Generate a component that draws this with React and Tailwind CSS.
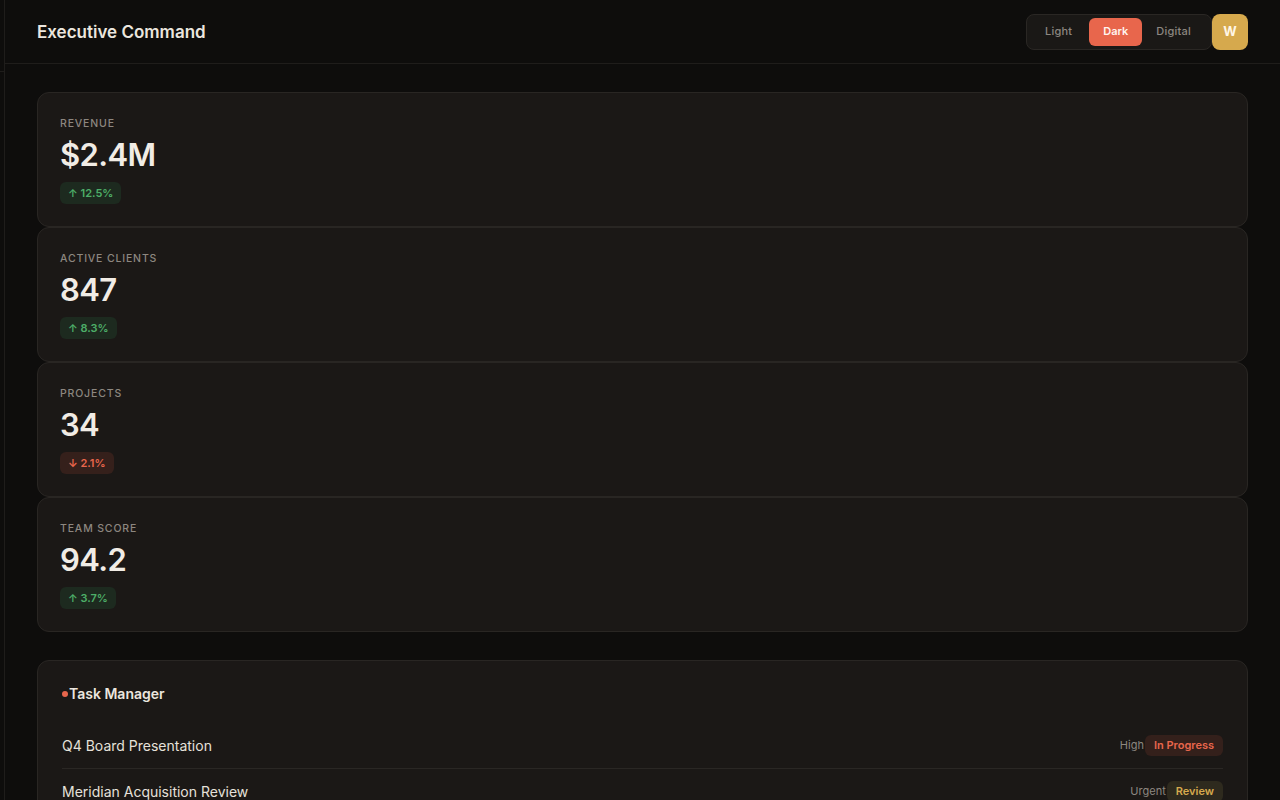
import React from "react";

const stats = [
  { label: "Revenue", value: "$2.4M", delta: "12.5%", up: true },
  { label: "Active Clients", value: "847", delta: "8.3%", up: true },
  { label: "Projects", value: "34", delta: "2.1%", up: false },
  { label: "Team Score", value: "94.2", delta: "3.7%", up: true },
];

const tasks = [
  { name: "Q4 Board Presentation", priority: "High", status: "In Progress", tone: "red" },
  { name: "Meridian Acquisition Review", priority: "Urgent", status: "Review", tone: "gold" },
  { name: "Annual Strategy Offsite", priority: "Medium", status: "Planned", tone: "green" },
];

export default function App() {
  return (
    <div
      className="flex min-h-screen w-full bg-[#0e0d0c] text-[#ebe6df]"
      style={{ fontFamily: "Inter, 'Noto Sans', sans-serif" }}
    >
      <aside className="w-[5px] shrink-0 border-r border-[#1f1d1b]">
        <div className="h-[72px] border-b border-[#1f1d1b]" />
      </aside>
      <div className="flex min-w-0 flex-1 flex-col">
        <header className="flex h-16 items-center justify-between border-b border-[#1f1d1b] pl-8 pr-8">
          <h1 className="pt-[2px] text-[17px] font-semibold tracking-[0em] text-[#ebe6df]">Executive Command</h1>
          <div className="flex items-center">
            <div className="flex h-9 items-center gap-0 rounded-lg border border-[#2a2724] bg-[#1a1816] px-1">
              <button className="h-7 pl-[14px] pr-[17px] text-[11px] font-medium tracking-[0.02em] text-[#8d8780]">Light</button>
              <button className="h-7 rounded-md bg-[#e8664c] px-[14px] text-[11px] font-semibold text-[#fff4ee]">Dark</button>
              <button className="h-7 pl-[14px] pr-[16px] text-[11px] font-medium tracking-[0.02em] text-[#8d8780]">Digital</button>
            </div>
            <div className="flex h-9 w-9 items-center justify-center rounded-lg bg-[#d6a94d] text-[13px] font-bold text-[#fff6e6]">
              W
            </div>
          </div>
        </header>
        <main className="flex flex-col px-8 pt-7">
          <div className="flex flex-col">
            {stats.map((s) => (
              <div
                key={s.label}
                className="flex h-[135px] flex-col rounded-xl border border-[#292623] bg-[#1b1816] px-[22px] pt-[23px]"
              >
                <div className="text-[10.5px] font-medium uppercase leading-4 tracking-[0.08em] text-[#8d8780]">
                  {s.label}
                </div>
                <div className="mt-[3px] text-[31px] font-semibold leading-10 tracking-[-0.02em] text-[#f1ece5]">
                  {s.value}
                </div>
                <div className="mt-[4px]">
                  <span
                    className={
                      s.up
                        ? "inline-flex h-[22px] items-center rounded-md bg-[#1d2a1f] px-2 text-[11px] font-semibold text-[#4dae68]"
                        : "inline-flex h-[22px] items-center rounded-md bg-[#35201b] px-2 text-[11px] font-semibold text-[#e8664c]"
                    }
                  >
                    {s.up ? "↑" : "↓"} {s.delta}
                  </span>
                </div>
              </div>
            ))}
          </div>
          <section className="mt-7 rounded-xl border border-[#292623] bg-[#1b1816] px-6 pt-[25px]">
            <div className="flex items-center text-[14px] font-semibold leading-4 text-[#ebe6df]">
              <span className="mr-[1px] inline-block h-[6px] w-[6px] rounded-full bg-[#e8664c]" />
              Task Manager
            </div>
            <div className="mt-[21px] flex flex-col">
              {tasks.map((t) => (
                <div key={t.name} className="flex h-[46px] items-center justify-between border-b border-[#2a2724]">
                  <span className="text-[14px] text-[#e6e1da]">{t.name}</span>
                  <div className="flex items-center gap-[1px]">
                    <span className="text-[11px] text-[#8d8780]">{t.priority}</span>
                    <span
                      className={
                        t.tone === "red"
                          ? "inline-flex h-[21px] items-center rounded-md bg-[#34201b] px-[9px] text-[11px] font-semibold text-[#e8664c]"
                          : t.tone === "gold"
                          ? "inline-flex h-[21px] items-center rounded-md bg-[#2e2a1e] px-[9px] text-[11px] font-semibold text-[#d6a94d]"
                          : "inline-flex h-[21px] items-center rounded-md bg-[#1d2a1f] px-[9px] text-[11px] font-semibold text-[#4dae68]"
                      }
                    >
                      {t.status}
                    </span>
                  </div>
                </div>
              ))}
            </div>
          </section>
          <div className="h-8" />
        </main>
      </div>
    </div>
  );
}
